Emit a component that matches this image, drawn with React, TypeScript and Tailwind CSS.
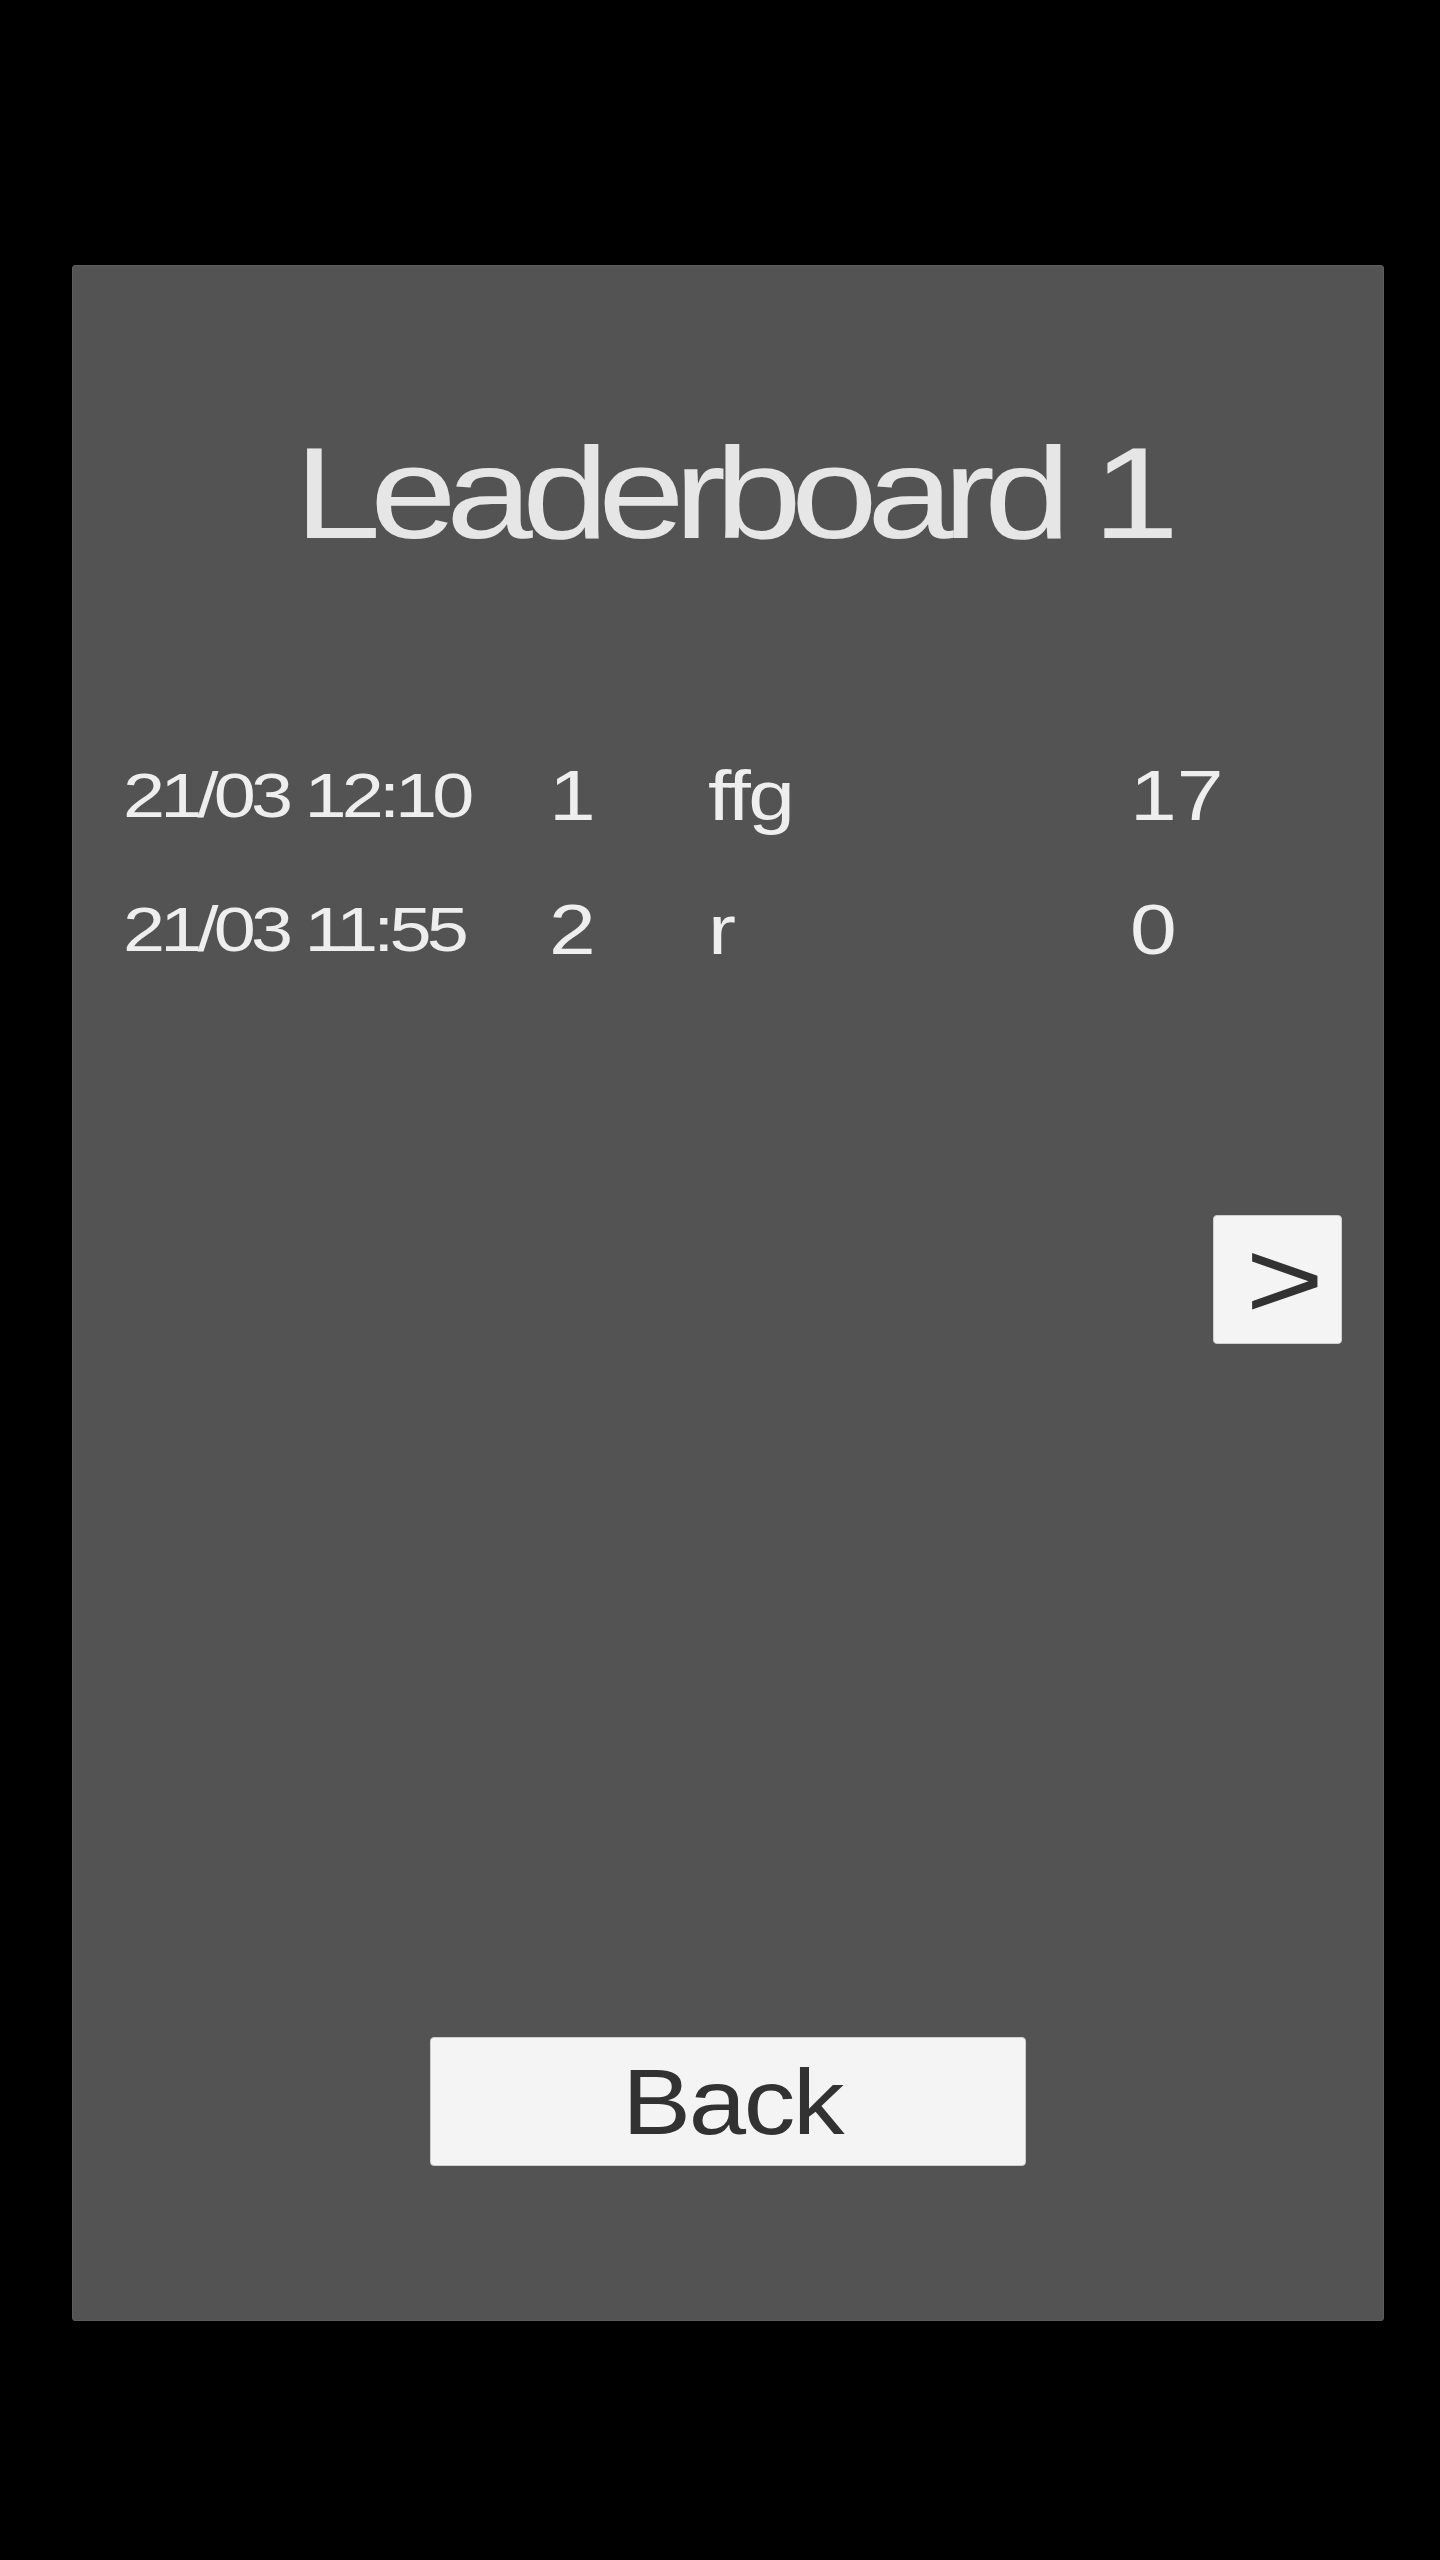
const rows = [
  { date: "21/03 12:10", rank: "1", name: "ffg", score: "17" },
  { date: "21/03 11:55", rank: "2", name: "r", score: "0" },
];

export default function App() {
  return (
    <div
      className="w-[1440px] h-[2560px] bg-black pt-[265px] pl-[72px]"
      style={{ fontFamily: '"Liberation Sans", Arial, sans-serif' }}
    >
      <div className="w-[1312px] h-[2056px] bg-[#535353] border border-[#5d5d5d] rounded-[3px] flex flex-col">
        {/* Title */}
        <div className="pt-[162px] flex justify-center pl-[6px]">
          <span className="inline-block text-[130px] leading-none text-[#e6e6e6] tracking-[-9px] scale-x-[1.2] whitespace-nowrap">
            Leaderboard 1
          </span>
        </div>

        {/* Rows */}
        <div className="mt-[203px] pl-[50px]">
          {rows.map((r) => (
            <div
              key={r.date}
              className="h-[134px] grid grid-cols-[426px_159px_422px_1fr] items-start text-[#eeeeee]"
            >
              <span className="inline-block mt-[3px] text-[63px] leading-none tracking-[-4px] scale-x-[1.2] origin-left whitespace-nowrap">
                {r.date}
              </span>
              <span className="inline-block text-[70px] leading-none scale-x-[1.2] origin-left">
                {r.rank}
              </span>
              <span className="inline-block text-[70px] leading-none tracking-[-2px] scale-x-[1.2] origin-left">
                {r.name}
              </span>
              <span className="inline-block text-[70px] leading-none scale-x-[1.2] origin-left">
                {r.score}
              </span>
            </div>
          ))}
        </div>

        {/* Next page */}
        <div className="mt-[186px] flex justify-end pr-[41px]">
          <button className="w-[129px] h-[129px] bg-[#f4f4f4] border border-[#cfcfcf] rounded-[4px] flex items-center justify-center pl-[14px]">
            <span className="inline-block text-[112px] leading-none text-[#323232] scale-x-[1.2]">
              &gt;
            </span>
          </button>
        </div>

        {/* Back */}
        <div className="mt-[693px] flex justify-center">
          <button className="w-[596px] h-[129px] bg-[#f4f4f4] border border-[#cfcfcf] rounded-[4px] flex items-center justify-center pl-[8px]">
            <span className="inline-block text-[92px] leading-none text-[#323232] tracking-[-2px] scale-x-[1.12]">
              Back
            </span>
          </button>
        </div>
      </div>
    </div>
  );
}
